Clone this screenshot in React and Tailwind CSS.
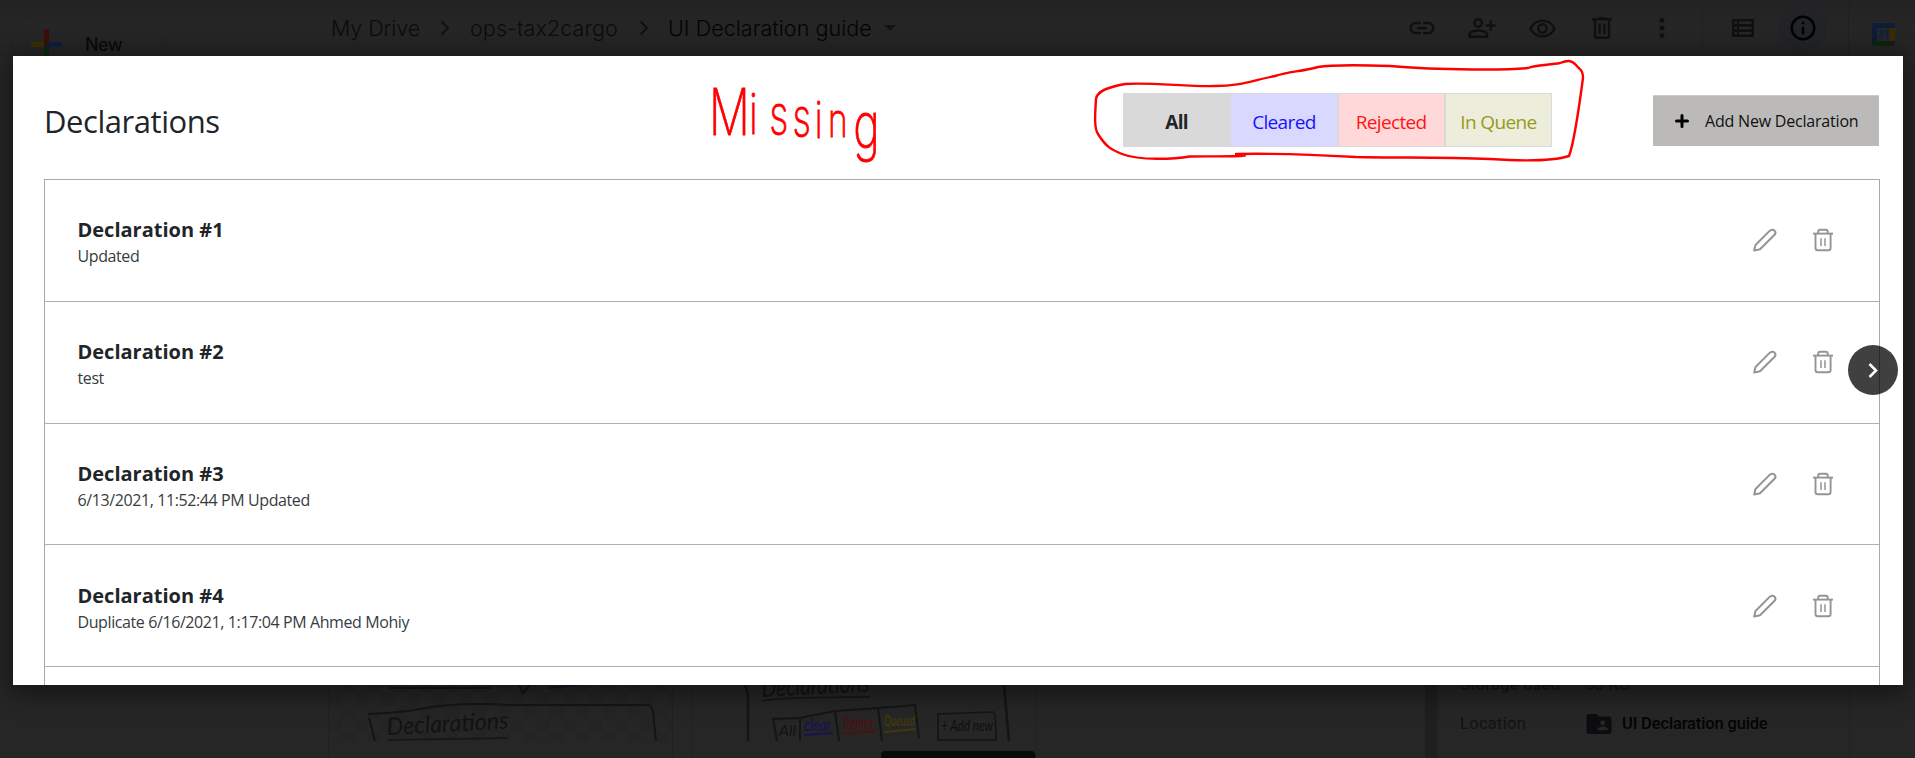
import React from "react";
import {
  MdLink,
  MdOutlinePersonAddAlt,
  MdOutlineRemoveRedEye,
  MdMoreVert,
  MdInfoOutline,
  MdFolderShared,
} from "react-icons/md";

const declarations = [
  { title: "Declaration #1", note: "Updated" },
  { title: "Declaration #2", note: "test" },
  { title: "Declaration #3", note: "6/13/2021, 11:52:44 PM Updated" },
  { title: "Declaration #4", note: "Duplicate 6/16/2021, 1:17:04 PM Ahmed Mohiy" },
];

const filters = [
  { label: "All", style: "bg-[#d9d9d9] text-[#212529] font-bold" },
  { label: "Cleared", style: "bg-[#d9d9ff] text-[#1414ff]" },
  { label: "Rejected", style: "bg-[#ffd9d9] text-[#ff1414]" },
  { label: "In Quene", style: "bg-[#ededdb] text-[#979a1c]" },
];

function Crumb() {
  return (
    <svg width="10" height="16" viewBox="0 0 10 16" fill="none" stroke="#111" strokeWidth="2">
      <path d="M1.5 1.5L8 8L1.5 14.5" />
    </svg>
  );
}

function DriveTrash() {
  return (
    <svg width="20" height="22" viewBox="0 0 20 22" fill="none" stroke="#101010" strokeWidth="2.4">
      <path d="M0 2.2H20M6.5 1.2H13.5M3 2.5V19.5Q3 20.8 4.3 20.8H15.7Q17 20.8 17 19.5V2.5M7.6 6.5V17M12.4 6.5V17" />
    </svg>
  );
}

function ListIcon() {
  return (
    <svg width="22" height="18" viewBox="0 0 22 18">
      <rect width="22" height="18" fill="#101010" />
      <path
        d="M2.5 3.8H5M7 3.8H19.5M2.5 9H5M7 9H19.5M2.5 14.2H5M7 14.2H19.5"
        stroke="#262626"
        strokeWidth="2.4"
      />
    </svg>
  );
}

function Calendar() {
  return (
    <svg width="23" height="23" viewBox="0 0 23 23">
      <rect width="23" height="23" rx="2" fill="#0d1c37" />
      <path d="M18 5H23V18H18z" fill="#3a2c02" />
      <path d="M1 18H18V23H3Q0 23 0 20V18z" fill="#08260f" />
      <path d="M18 18H23L18 23z" fill="#3a0c08" />
      <rect x="5" y="5" width="13" height="13" fill="#262626" />
      <text x="11.5" y="15.2" textAnchor="middle" fontSize="10.5" fontFamily="Roboto, sans-serif" fontWeight="700" fill="#0c1f45">
        31
      </text>
    </svg>
  );
}

function Pencil() {
  return (
    <svg width="24" height="24" viewBox="0 0 24 24" fill="none" stroke="#949494" strokeWidth="2" strokeLinejoin="round">
      <path d="M1.2 22.6L2.5 17L16.6 2.9C18.1 1.4 20.2 1.3 21.5 2.6C22.8 3.9 22.6 5.8 21.1 7.3L7 21.2Z" />
    </svg>
  );
}

function Trash() {
  return (
    <svg width="20" height="24" viewBox="0 0 20 24" fill="none" stroke="#949494" strokeWidth="1.9">
      <path d="M0 5.6H20" />
      <path d="M5.2 5.4V3.6Q5.2 1.8 7 1.8H12.9Q14.7 1.8 14.7 3.6V5.4" />
      <path d="M2.5 5.8V20Q2.5 22.3 4.8 22.3H15.3Q17.6 22.3 17.6 20V5.8" />
      <path d="M8 10.3V18M12 10.3V18" strokeWidth="1.5" />
    </svg>
  );
}

function DriveHeader() {
  return (
    <header className="flex h-[56px] items-start bg-gradient-to-b from-[#222222] via-[#262626] to-[#242424]">
      <div className="ml-[11px] mt-[14px] flex h-[60px] w-[151px] shrink-0 items-center rounded-full border border-[#232323] pl-[19px]">
        <svg className="shrink-0" width="31" height="31" viewBox="0 0 31 31">
          <path d="M13 0H18V13L13 18z" fill="#3d0d0a" />
          <path d="M18 13H31V18H13z" fill="#0e1e3c" />
          <path d="M0 13H13V18H0z" fill="#3c2d01" />
          <path d="M13 18H18V31H13z" fill="#08290f" />
        </svg>
        <span className="ml-[23px] text-[18px] font-medium tracking-[-0.6px] text-[#0a0a0a]">New</span>
      </div>
      <nav className="ml-[169px] flex h-[56px] shrink-0 items-center text-[21.5px] font-light tracking-[-0.1px] text-[#0c0c0c]">
        <span className="w-[109px] whitespace-nowrap">My Drive</span>
        <Crumb />
        <span className="ml-[20px] w-[169px] whitespace-nowrap tracking-[0.1px]">ops-tax2cargo</span>
        <Crumb />
        <span className="ml-[19px] w-[216px] whitespace-nowrap tracking-[0.05px] text-[#040404]">UI Declaration guide</span>
        <svg width="12" height="6" viewBox="0 0 12 6" fill="#141414">
          <path d="M0 0H12L6 6z" />
        </svg>
      </nav>
      <div className="ml-auto mr-[65px] flex h-[56px] items-center text-[#101010]">
        <div className="flex w-[60px] justify-center"><MdLink size={30} /></div>
        <div className="flex w-[60px] justify-center"><MdOutlinePersonAddAlt size={30} /></div>
        <div className="flex w-[60px] justify-center"><MdOutlineRemoveRedEye size={29} /></div>
        <div className="flex w-[60px] justify-center"><DriveTrash /></div>
        <div className="flex w-[60px] justify-center"><MdMoreVert size={30} /></div>
        <div className="ml-[10px] h-[40px] w-px bg-[#202020]" />
        <div className="ml-[29px]"><ListIcon /></div>
        <div className="ml-[25px] flex h-[48px] w-[48px] items-center justify-center rounded-full bg-[#222326] text-black">
          <MdInfoOutline size={30} />
        </div>
        <div className="ml-[21px] h-[56px] w-px bg-[#202020]" />
      </div>
      <div className="-ml-[42px] mr-[20px] mt-[23px]"><Calendar /></div>
    </header>
  );
}

function SketchOne() {
  return (
    <svg width="343" height="120" viewBox="329 621 343 120" fill="none" stroke="#151515" strokeWidth="2">
      <defs>
        <pattern id="checks" x="329" y="693" width="26" height="26" patternUnits="userSpaceOnUse">
          <rect width="13" height="13" fill="#242424" stroke="none" />
          <rect x="13" y="13" width="13" height="13" fill="#242424" stroke="none" />
        </pattern>
      </defs>
      <rect x="329" y="621" width="343" height="120" fill="url(#checks)" stroke="none" />
      <path d="M368 714C385 713 400 713 420 709C445 704 475 703 510 705L648 705Q652 705 653 712L656 741M369 718L375 741" />
      <path d="M390 688H490M519 685L523 693L530 685" />
      <path d="M388 740L508 738" strokeWidth="1.6" />
      <path d="M549 688Q570 686 580 684" stroke="#151728" />
      <text
        x="387"
        y="735"
        transform="rotate(-3 387 735)"
        fontFamily="Lato, sans-serif"
        fontSize="24"
        fontStyle="italic"
        textLength="122"
        lengthAdjust="spacingAndGlyphs"
        fill="#131313"
        stroke="none"
      >
        Declarations
      </text>
    </svg>
  );
}

function SketchTwo() {
  const hand = {
    fontFamily: "Lato, sans-serif",
    fontStyle: "italic",
    stroke: "none",
    lengthAdjust: "spacingAndGlyphs",
  };
  return (
    <svg width="343" height="120" viewBox="692 621 343 120" fill="none" stroke="#151515" strokeWidth="2">
      <path d="M745 685L748 695V741M1004 685L1009 741" strokeWidth="2.5" />
      <path d="M762 701Q780 697 870 697" strokeWidth="1.6" />
      <text {...hand} x="762" y="697" fontSize="25" fill="#131313" textLength="108" transform="rotate(-3 762 697)">
        Declarations
      </text>
      <path d="M777 741L773 719L800 718L835 711L878 708L915 705L919 738M800 718V741M835 711L839 741M878 708L882 741" />
      <text {...hand} x="779" y="736" fontSize="15" fill="#121212" textLength="17">All</text>
      <text {...hand} x="804" y="731" fontSize="17" fontWeight="700" fill="#15154a" textLength="27">clear</text>
      <text {...hand} x="843" y="729" fontSize="17" fontWeight="700" fill="#4a1212" textLength="31">Reject</text>
      <text {...hand} x="884" y="726" fontSize="16" fontWeight="700" fill="#41380b" textLength="31">Queued</text>
      <path d="M804 735L833 733" stroke="#15154a" />
      <path d="M842 734L876 731" stroke="#4a1212" />
      <path d="M884 732L916 729" stroke="#41380b" />
      <path d="M938 741V714L993 712Q996 712 996 741M938 740H996" strokeWidth="1.7" />
      <text {...hand} x="941" y="731" fontSize="16" fill="#0f0f0f" textLength="52">+ Add new</text>
    </svg>
  );
}

function DriveBody() {
  return (
    <div className="flex min-h-0 flex-1 items-end">
      <div className="ml-[328px] h-[137px] w-[345px] overflow-hidden border-x border-[#212121]">
        <SketchOne />
      </div>
      <div className="ml-[18px] h-[137px] w-[345px] overflow-hidden border-x border-[#212121]">
        <SketchTwo />
      </div>
      <div className="-ml-[155px] h-[7px] w-[154px] rounded-t bg-[#0a0a0a]" />
      <div className="ml-[390px] h-[137px] w-[12px] bg-[#1f1f1f]" />
      <aside className="ml-px h-[137px] w-[412px] border-x border-[#212121] pl-[21px] pt-[50px] font-[Roboto,sans-serif] text-[16.5px]">
        <div className="flex h-[28px] items-center text-[#131313]">
          <span className="w-[125px] whitespace-nowrap tracking-[0.3px]">Storage used</span>
          <span className="tracking-[0.3px]">53 KB</span>
        </div>
        <div className="mt-[11px] flex h-[28px] items-center">
          <span className="w-[124px] tracking-[0.3px] text-[#131313]">Location</span>
          <MdFolderShared size={30} className="text-[#0c0d0f]" />
          <span className="ml-[8px] whitespace-nowrap font-medium tracking-[-0.15px] text-[#040404]">UI Declaration guide</span>
        </div>
      </aside>
    </div>
  );
}

function Annotation() {
  return (
    <svg className="pointer-events-none absolute left-0 top-0" width="1915" height="758" viewBox="0 0 1915 758" fill="none">
      <path
        d="M1236 154C1280 153 1320 155 1356 157C1400 158 1440 157 1490 159C1520 161 1550 162 1569 156C1573 146 1579 108 1583 78C1583 70 1580 70 1576 65C1571 60 1568 60 1560 63C1550 65 1535 65 1528 68C1500 71 1420 69 1390 66C1360 65 1330 65 1318 67C1300 72 1290 71 1275 76C1250 81 1240 86 1215 86C1190 87 1150 82 1125 84C1108 87 1097 91 1096 99C1095 115 1094 128 1098 134C1106 147 1112 150 1122 154C1140 161 1175 159 1190 156.5C1210 156 1230 157 1245 155.5"
        stroke="#ff0000"
        strokeWidth="2.4"
        strokeLinecap="round"
      />
      <text
        transform="scale(0.7 1)"
        fontFamily="Inter, sans-serif"
        fontWeight="200"
        fill="#ff0000"
        stroke="#ff0000"
        strokeWidth="0.9"
        fontSize="52"
      >
        <tspan x="1013" y="135" fontSize="65">M</tspan>
        <tspan x="1070" y="134" fontSize="56">i</tspan>
        <tspan x="1099" y="134" fontSize="54">s</tspan>
        <tspan x="1132" y="136" fontSize="52">s</tspan>
        <tspan x="1164" y="138" fontSize="50">i</tspan>
        <tspan x="1183" y="137" fontSize="48">n</tspan>
        <tspan x="1219" y="148" fontSize="64">g</tspan>
      </text>
    </svg>
  );
}

export default function App() {
  return (
    <div className="relative h-[758px] w-[1915px] overflow-hidden bg-[#262626] font-[Inter,sans-serif]">
      <div className="flex h-full flex-col">
        <DriveHeader />
        <DriveBody />
      </div>

      <main className="absolute left-[13px] top-[56px] flex h-[629px] w-[1890px] flex-col overflow-hidden bg-white pl-[31px] pr-[24px] font-['Open_Sans','Noto_Sans',sans-serif] text-[#212529] shadow-[0_5px_24px_4px_rgba(0,0,0,0.45)]">
        <div className="flex h-[123px] shrink-0 items-center pt-[5px]">
          <h1 className="pt-[3px] text-[31px] leading-none tracking-[-0.45px]">Declarations</h1>
          <div className="ml-auto flex h-[54px] w-[429px] border border-[#d9dadd]">
            {filters.map((f, i) => (
              <button
                key={f.label}
                className={
                  "flex flex-1 items-center justify-center pt-[4px] text-[19px] tracking-[-0.65px] " +
                  (i > 0 ? "border-l-2 border-[#dadadd] " : "") +
                  f.style
                }
              >
                {f.label}
              </button>
            ))}
          </div>
          <button className="ml-[101px] flex h-[51px] w-[226px] items-center border-t border-[#cccccc] bg-[#bbbab9] pl-[22px] text-[16px] tracking-[-0.2px] text-[#111]">
            <svg width="14" height="14" viewBox="0 0 14 14" stroke="#000" strokeWidth="3" strokeLinecap="round">
              <path d="M7 1.5V12.5M1.5 7H12.5" />
            </svg>
            <span className="ml-[16px] whitespace-nowrap">Add New Declaration</span>
          </button>
        </div>

        <ul className="h-[600px] w-[1836px] shrink-0 border border-[#a9a9a9]">
          {declarations.map((d) => (
            <li key={d.title} className="flex h-[121.8px] items-center border-b border-[#b0b0b0] pl-[32.5px] pr-[46px]">
              <div className="pt-[7px]">
                <h2 className="text-[20px] font-bold leading-[26px]">{d.title}</h2>
                <p className="text-[16px] leading-[27px] tracking-[-0.4px] text-[#383c40]">{d.note}</p>
              </div>
              <div className="ml-auto flex items-center gap-[36px]">
                <Pencil />
                <Trash />
              </div>
            </li>
          ))}
        </ul>
      </main>

      <Annotation />

      <button className="absolute left-[1848px] top-[345px] flex h-[50px] w-[50px] items-center justify-center rounded-full bg-black/75">
        <svg width="10" height="15" viewBox="0 0 10 15" fill="none" stroke="#fff" strokeWidth="2.5">
          <path d="M1.5 1L8 7.5L1.5 14" />
        </svg>
      </button>
    </div>
  );
}
